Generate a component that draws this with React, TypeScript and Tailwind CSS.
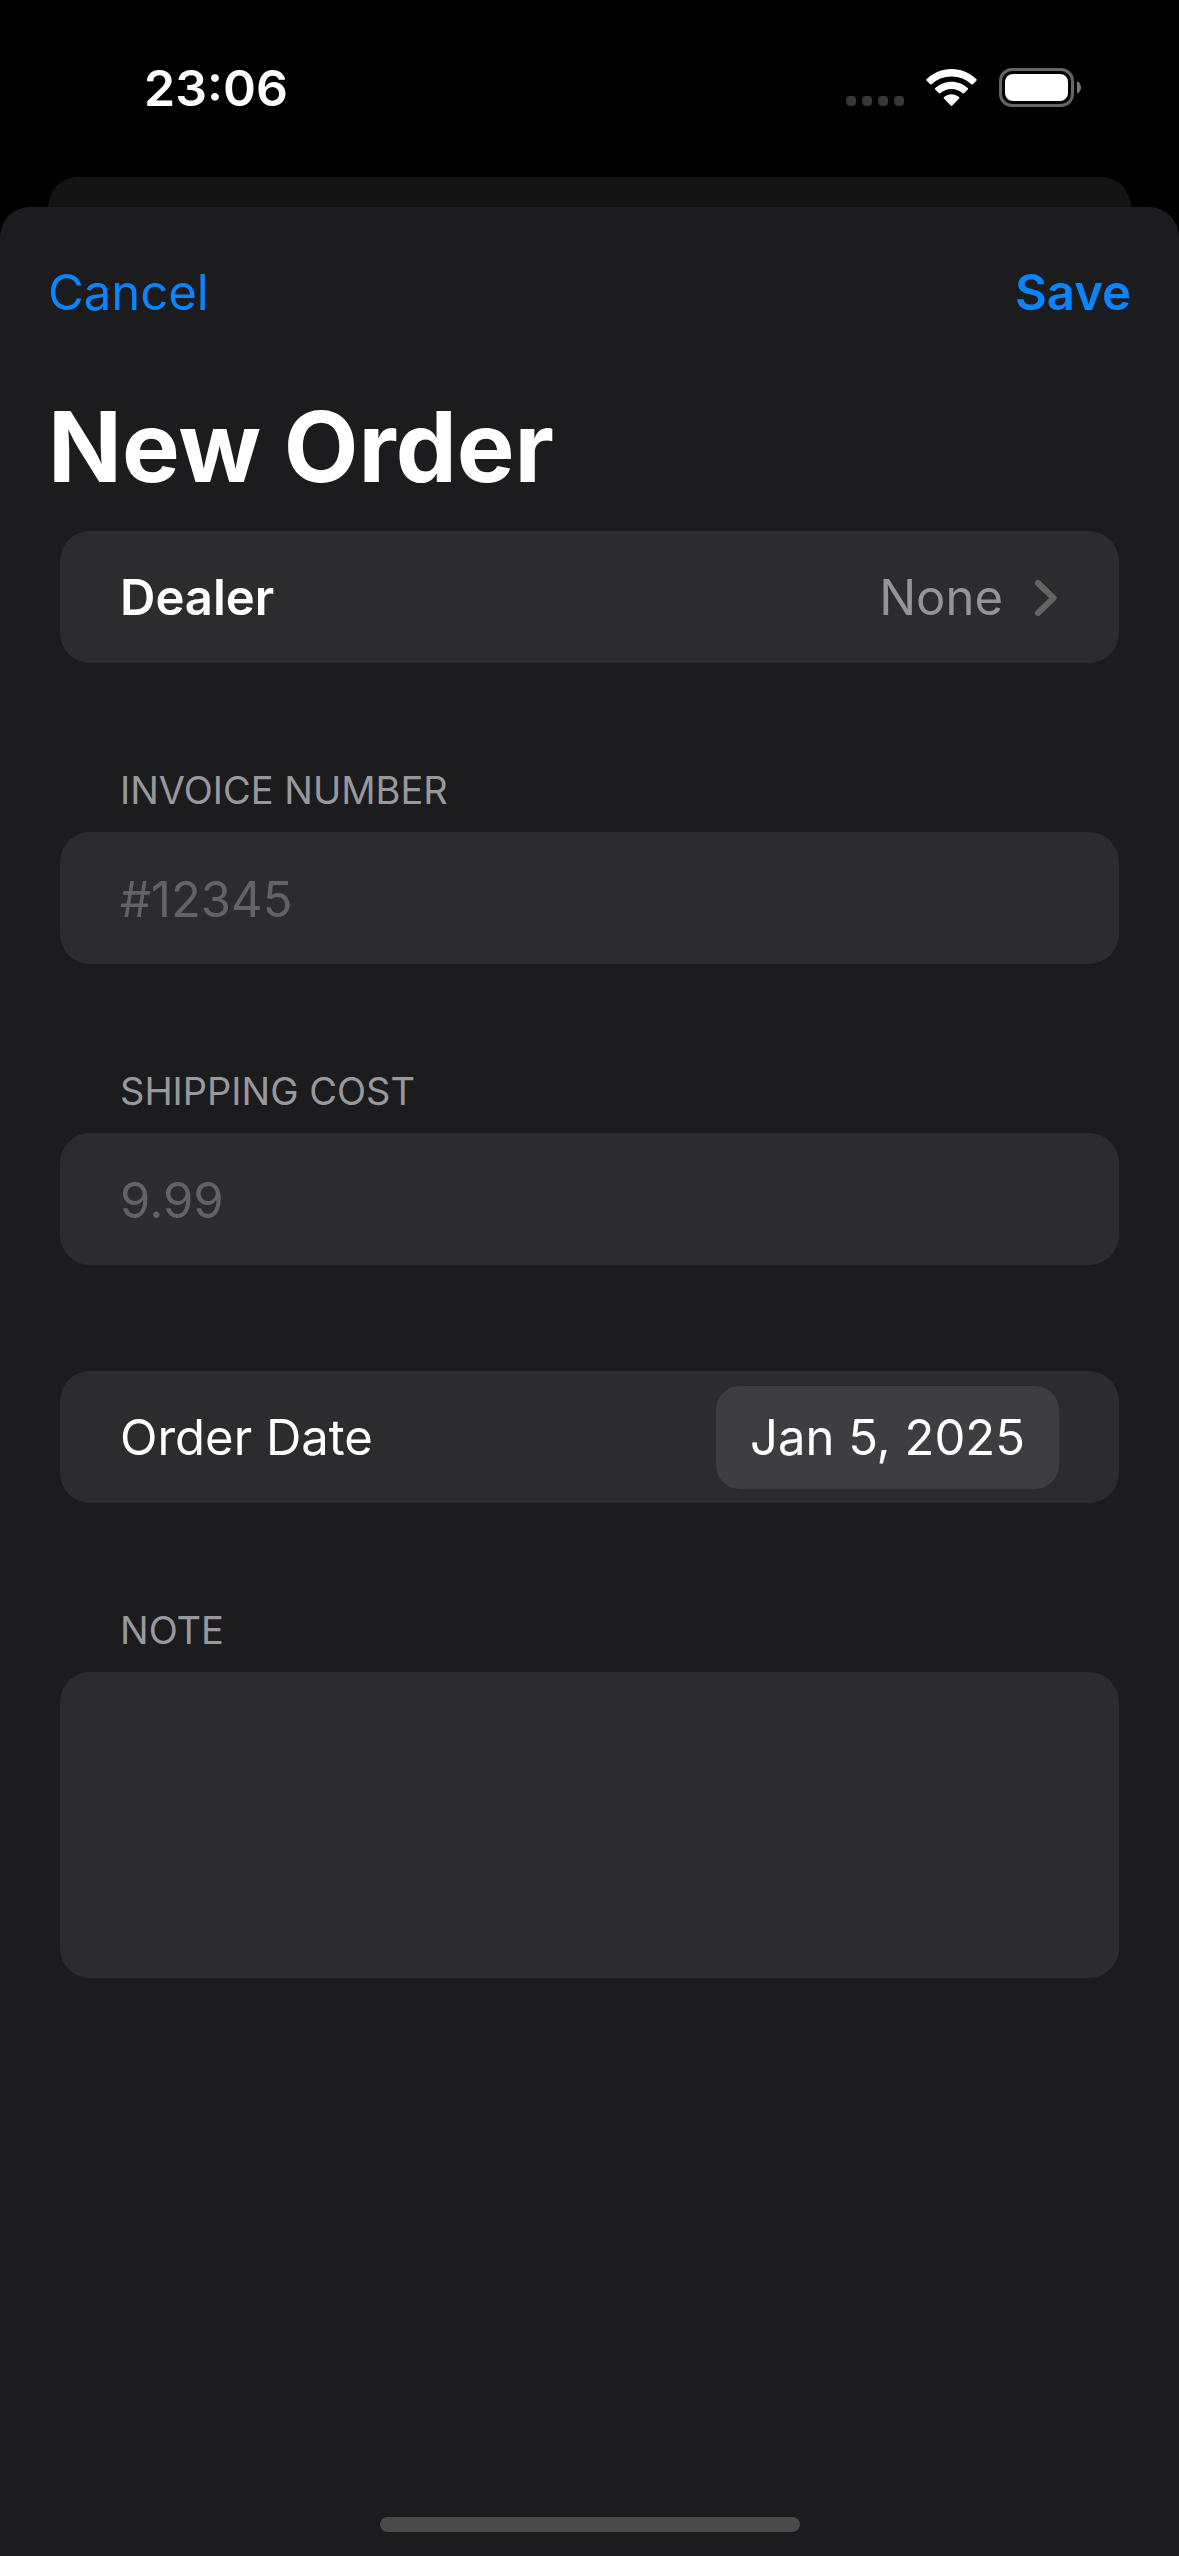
import { useId, useState } from "react";
import type { ReactNode } from "react";

function SignalDots() {
  return (
    <div className="flex gap-1.5 self-end pb-px" aria-label="No cellular signal">
      {[0, 1, 2, 3].map((dot) => (
        <span key={dot} className="size-2.5 rounded-[4px] bg-[#373737]" />
      ))}
    </div>
  );
}

function WifiIcon() {
  return (
    <svg width="51" height="38" viewBox="0 0 51 38" fill="#fff" aria-label="Wi-Fi">
      <path d="M25.5 0C35.3 0 44 3.9 50.5 10.2c.4.4.4 1 0 1.4l-3.6 3.7c-.4.4-1 .4-1.4 0C40.3 10.4 33.2 7.4 25.5 7.4S10.7 10.4 5.5 15.3c-.4.4-1 .4-1.4 0L.5 11.6c-.4-.4-.4-1 0-1.4C7 3.9 15.700 0 25.500 0Z" />
      <path d="M25.5 12.7c6.2 0 11.9 2.4 16.2 6.3.5.4.5 1 .1 1.5l-3.7 3.8c-.4.4-1 .4-1.4 0-2.9-2.7-6.9-4.3-11.2-4.3s-8.300 1.600-11.200 4.300c-.4.4-1 .4-1.400 0l-3.700-3.800c-.4-.5-.4-1.100.1-1.500 4.300-3.900 10-6.300 16.200-6.300Z" />
      <path d="M25.5 25.3c2.900 0 5.500 1.100 7.500 2.800.5.400.5 1 .1 1.500l-6.800 7c-.5.500-1.100.5-1.600 0l-6.800-7c-.4-.5-.4-1.100.1-1.500 2-1.700 4.600-2.800 7.500-2.800Z" />
    </svg>
  );
}

function BatteryIcon() {
  return (
    <svg width="82" height="39" viewBox="0 0 82 39" fill="none" aria-label="Battery full">
      <rect x="1.5" y="1.5" width="72" height="36" rx="11.5" stroke="#656565" strokeWidth="3" />
      <rect x="6" y="6" width="63" height="27" rx="8" fill="#fff" />
      <path d="M78 13.2c2.5 1 4 3.500 4 6.300s-1.500 5.300-4 6.300V13.200Z" fill="#757575" />
    </svg>
  );
}

function ChevronIcon() {
  return (
    <svg width="24" height="36" viewBox="0 0 24 36" fill="none" aria-hidden="true">
      <path d="M3 3l15.500 15L3 33" stroke="#646464" strokeWidth="6" strokeLinecap="round" strokeLinejoin="round" />
    </svg>
  );
}

function StatusBar() {
  return (
    <header className="flex h-[177px] items-start justify-between pt-[68px] pr-[98px] pl-36">
      <time className="text-[50px] leading-10 font-semibold">23:06</time>
      <div className="flex h-[39px] items-center">
        <SignalDots />
        <span className="w-[22px]" />
        <WifiIcon />
        <span className="w-[22px]" />
        <BatteryIcon />
      </div>
    </header>
  );
}

function Field({ label, children }: { label: string; children: (id: string) => ReactNode }) {
  const id = useId();
  return (
    <div className="flex flex-col">
      <label htmlFor={id} className="mb-[17px] px-[60px] text-[38px] leading-[50px] text-[#98989f] uppercase">
        {label}
      </label>
      {children(id)}
    </div>
  );
}

const box =
  "w-full rounded-[30px] bg-[#2c2c2e] px-[60px] text-[49px] outline-none placeholder:text-[#636366]";

export default function App() {
  const [invoice, setInvoice] = useState("");
  const [cost, setCost] = useState("");
  const [note, setNote] = useState("");

  return (
    <div className="flex min-h-screen flex-col bg-black font-['Inter',sans-serif] text-white">
      <StatusBar />
      <div className="mx-12 h-[30px] rounded-t-[30px] bg-[#141415]" />
      <main className="flex flex-1 flex-col rounded-t-[30px] bg-[#1c1c1e] pb-6">
        <nav className="flex items-center justify-between px-12 pt-14 text-[49px] leading-[60px] text-[#0a84ff]">
          <button type="button">Cancel</button>
          <button type="submit" form="order" className="font-semibold">Save</button>
        </nav>
        <h1 className="px-12 pt-16 text-[97px] leading-[120px] font-bold">New Order</h1>

        <form id="order" className="flex flex-col px-[60px] pt-6" onSubmit={(e) => e.preventDefault()}>
          <button type="button" className={`${box} flex h-[132px] items-center pt-0.5`}>
            <span className="flex-1 text-left font-semibold">Dealer</span>
            <span className="mr-8 text-[#959597]">None</span>
            <ChevronIcon />
          </button>

          <div className="pt-[102px]">
            <Field label="Invoice Number">
              {(id) => (
                <input
                  id={id}
                  type="text"
                  placeholder="#12345"
                  value={invoice}
                  onChange={(e) => setInvoice(e.target.value)}
                  className={`${box} h-[132px] pt-0.5`}
                />
              )}
            </Field>
          </div>

          <div className="pt-[102px]">
            <Field label="Shipping Cost">
              {(id) => (
                <input
                  id={id}
                  type="text"
                  inputMode="decimal"
                  placeholder="9.99"
                  value={cost}
                  onChange={(e) => setCost(e.target.value)}
                  className={`${box} h-[132px] pt-0.5`}
                />
              )}
            </Field>
          </div>

          <div className={`${box} mt-[106px] flex h-[132px] items-center justify-between`}>
            <label htmlFor="order-date" className="pt-0.5">Order Date</label>
            <button id="order-date" type="button" className="h-[103px] rounded-3xl bg-[#3e3d42] px-[34px] pt-0.5">
              Jan 5, 2025
            </button>
          </div>

          <div className="pt-[102px]">
            <Field label="Note">
              {(id) => (
                <textarea
                  id={id}
                  value={note}
                  onChange={(e) => setNote(e.target.value)}
                  className={`${box} block h-[306px] resize-none py-9`}
                />
              )}
            </Field>
          </div>
        </form>

        <div className="mx-auto mt-auto h-[15px] w-[420px] rounded-full bg-[#4a4a4a]" />
      </main>
    </div>
  );
}
